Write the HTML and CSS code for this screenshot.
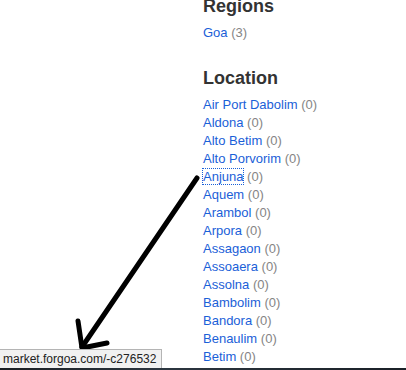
FILE: index.html
```html
<!DOCTYPE html>
<html lang="en">
<head>
  <meta charset="UTF-8">
  <title>Forgoa Market - Locations</title>
  <link rel="stylesheet" href="styles.css">
</head>
<body>
  <div class="sidebar">
    <div class="block">
      <h2>Regions</h2>
      <ul class="links">
        <li><a href="#">Goa</a> <span class="count">(3)</span></li>
      </ul>
    </div>

    <div class="block">
      <h2>Location</h2>
      <ul class="links">
        <li><a href="#">Air Port Dabolim</a> <span class="count">(0)</span></li>
        <li><a href="#">Aldona</a> <span class="count">(0)</span></li>
        <li><a href="#">Alto Betim</a> <span class="count">(0)</span></li>
        <li><a href="#">Alto Porvorim</a> <span class="count">(0)</span></li>
        <li><a href="#" class="focused">Anjuna</a> <span class="count">(0)</span></li>
        <li><a href="#">Aquem</a> <span class="count">(0)</span></li>
        <li><a href="#">Arambol</a> <span class="count">(0)</span></li>
        <li><a href="#">Arpora</a> <span class="count">(0)</span></li>
        <li><a href="#">Assagaon</a> <span class="count">(0)</span></li>
        <li><a href="#">Assoaera</a> <span class="count">(0)</span></li>
        <li><a href="#">Assolna</a> <span class="count">(0)</span></li>
        <li><a href="#">Bambolim</a> <span class="count">(0)</span></li>
        <li><a href="#">Bandora</a> <span class="count">(0)</span></li>
        <li><a href="#">Benaulim</a> <span class="count">(0)</span></li>
        <li><a href="#">Betim</a> <span class="count">(0)</span></li>
      </ul>
    </div>
  </div>

  <svg class="arrow" width="406" height="370" viewBox="0 0 406 370">
    <polyline points="197,178 82,347" />
    <polyline points="78,321 82,348 107,343" />
  </svg>

  <div class="status-bar">market.forgoa.com/-c276532</div>
  <div class="taskbar"></div>
</body>
</html>
```

FILE: styles.css
```css
body {
  margin: 0;
  padding: 0;
  background: #fff;
  font-family: 'Liberation Sans', Arial, sans-serif;
  overflow: hidden;
}
.sidebar {
  padding-left: 203px;
  margin-top: -4px;
}
.block h2 {
  margin: 0 0 8px;
  font-size: 18px;
  line-height: 20px;
  font-weight: bold;
  color: #333;
}
.links {
  list-style: none;
  margin: 0 0 26px;
  padding: 0;
  font-size: 13px;
  line-height: 18px;
}
.links a {
  color: #1a60d8;
  text-decoration: none;
}
.links .focused {
  outline: 1px dotted #1a60d8;
  outline-offset: 0;
}
.count {
  color: #858585;
}
.arrow {
  position: fixed;
  top: 0;
  left: 0;
  pointer-events: none;
}
.arrow polyline {
  fill: none;
  stroke: #000;
  stroke-width: 5;
  stroke-linecap: round;
  stroke-linejoin: round;
}
.status-bar {
  position: fixed;
  left: 0;
  bottom: 2px;
  width: 158px;
  height: 18px;
  padding-left: 3px;
  background: #f1f1f1;
  border: 1px solid #b4b4b4;
  border-left: none;
  border-bottom: none;
  font-size: 12px;
  line-height: 19px;
  color: #222;
}
.taskbar {
  position: fixed;
  left: 0;
  right: 0;
  bottom: 0;
  height: 2px;
  background: linear-gradient(to right, #1a1f24, #2c3640 40%, #1a2027);
}
```
